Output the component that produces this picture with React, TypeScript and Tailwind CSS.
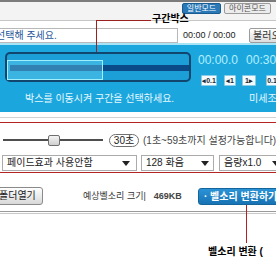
const Caret = () => (
  <svg width="8" height="5" viewBox="0 0 8 5" className="flex-none">
    <path d="M0 0h8L4 5z" fill="#222" />
  </svg>
);

const StepButton = ({ label, className }: { label: string; className: string }) => (
  <span
    className={`h-[11px] rounded-[1px] border border-[#8ccbe6] bg-[#f4fbfe] text-[7px] leading-[9px] text-center text-[#1d2b36] font-bold whitespace-nowrap overflow-hidden ${className}`}
  >
    {label}
  </span>
);

export default function App() {
  return (
    <div className="relative w-[276px] h-[260px] overflow-hidden bg-white text-[#333] font-['Liberation_Sans','Noto_Sans_CJK_KR',sans-serif]">
      {/* toolbar */}
      <div className="h-[21px] flex justify-end items-start gap-[3px] pr-[5px] pt-[1px] border-t-[2px] border-t-[#7c7c7c] border-b border-b-[#c6c6c6] bg-[#f3f3f3]">
        <span className="h-[11px] w-[39px] rounded-[2px] border border-[#1b5c90] bg-[#2a79b6] text-white text-[8px] leading-[9px] text-center">
          일반모드
        </span>
        <span className="h-[11px] w-[47px] rounded-[2px] border border-[#9a9a9a] bg-[#ececec] text-[#555] text-[8px] leading-[9px] text-center">
          아이콘모드
        </span>
      </div>

      {/* file row */}
      <div className="mt-[7px] h-[15px] flex items-center">
        <div className="w-[178px] h-full flex items-center border-y border-r border-[#b8b8b8] bg-white">
          <span className="-ml-[4px] text-[10px] leading-none text-[#28579a] whitespace-nowrap">선택해 주세요.</span>
        </div>
        <span className="ml-[5px] text-[9px] leading-none text-[#222] whitespace-nowrap">00:00 / 00:00</span>
        <span className="ml-auto -mr-[6px] w-[33px] h-[15px] rounded-[2px] border border-[#9c9c9c] bg-gradient-to-b from-white to-[#dcdcdc] text-[10px] leading-[13px] pl-[3px] whitespace-nowrap">
          불러오기
        </span>
      </div>

      {/* range panel */}
      <div className="h-[69px] border-t-[2px] border-t-[#a8e3f6] bg-[#1ba7de]">
        <div className="flex pt-[7px] pl-[5px]">
          <div className="relative w-[186px] h-[30px] flex-none rounded-[5px] border-2 border-[#11466f] bg-[#1b9fd6]">
            <div className="absolute left-[3px] right-0 top-[11px] h-[6px] bg-[#0b4a88]" />
            <div className="absolute left-0 top-[6px] w-[96px] h-[20px] border border-[#9ff0ff] bg-[#6fd4f5]/40" />
          </div>
          <div className="ml-[7px] flex flex-col">
            <div className="mt-[2px] h-[12px] flex text-[12px] leading-[12px] text-[#b4efff] whitespace-nowrap">
              <span>00:00.0</span>
              <span className="ml-[8px]">00:30.0</span>
            </div>
            <div className="mt-[9px] flex">
              <StepButton label="◂0.1" className="ml-[3px] w-[16px]" />
              <StepButton label="◂1" className="ml-[7px] w-[12px]" />
              <StepButton label="1▸" className="ml-[6px] w-[14px]" />
              <StepButton label="0.1▸" className="ml-[10px] w-[16px]" />
            </div>
          </div>
        </div>
        <div className="mt-[8px] h-[10px] flex items-center text-[10px] leading-none text-[#e6f8ff] whitespace-nowrap">
          <span className="pl-[25px] w-[249px] flex-none">박스를 이동시켜 구간을 선택하세요.</span>
          <span>미세조정</span>
        </div>
      </div>

      <div className="h-[10px] pt-[5px]">
        <div className="h-px bg-[#d2d2d2]" />
      </div>

      {/* settings */}
      <div className="h-[51px] flex flex-col border-y border-[#b42424]">
        <div className="mt-[11px] h-[13px] flex items-center">
          <div className="relative ml-[3px] w-[100px] h-[13px] flex-none">
            <div className="absolute left-0 right-0 top-[5px] h-[2px] bg-[#4e4e4e]" />
            <div className="absolute left-[45px] top-[1px] w-[12px] h-[11px] rounded-[2px] border border-[#6f6f6f] bg-gradient-to-b from-[#f4f4f4] to-[#cfcfcf]" />
          </div>
          <span className="ml-[6px] w-[30px] h-[13px] flex-none rounded-full border border-[#707070] bg-white text-[10px] leading-[11px] text-center text-[#222]">
            30초
          </span>
          <span className="ml-[4px] text-[10px] leading-none text-[#444] whitespace-nowrap">(1초~59초까지 설정가능합니다)</span>
        </div>
        <div className="mt-[8px] h-[16px] flex">
          <div className="ml-[2px] w-[135px] flex-none flex items-center justify-between pl-[4px] pr-[6px] border border-[#ababab] bg-white">
            <span className="text-[10px] leading-none text-[#222] whitespace-nowrap">페이드효과 사용안함</span>
            <Caret />
          </div>
          <div className="ml-[4px] w-[73px] flex-none flex items-center justify-between pl-[4px] pr-[4px] border border-[#ababab] bg-white">
            <span className="text-[10px] leading-none text-[#222] whitespace-nowrap">128 화음</span>
            <Caret />
          </div>
          <div className="ml-[5px] w-[66px] flex-none flex items-center justify-between pl-[4px] pr-[4px] border border-[#ababab] bg-white">
            <span className="text-[10px] leading-none text-[#222] whitespace-nowrap">음량x1.0</span>
            <Caret />
          </div>
        </div>
      </div>

      {/* actions */}
      <div className="mt-[14px] h-[18px] flex items-center">
        <span className="-ml-[5px] w-[48px] h-[18px] flex-none rounded-[3px] border border-[#8a8a8a] bg-gradient-to-b from-white to-[#d8d8d8] text-[10px] leading-[16px] pl-[3px] text-[#222] whitespace-nowrap">
          폴더열기
        </span>
        <span className="ml-[40px] text-[9px] leading-none text-[#333] whitespace-nowrap">예상벨소리 크기|</span>
        <span className="ml-[8px] text-[9px] leading-none font-bold text-[#444]">469KB</span>
        <span className="ml-auto -mr-[10px] w-[88px] h-[17px] flex-none rounded-[3px] border border-[#15659d] bg-gradient-to-b from-[#2a93d6] to-[#1773b4] text-white text-[10px] leading-[15px] font-bold pl-[5px] whitespace-nowrap">
          · 벨소리 변환하기
        </span>
      </div>
      <div className="mt-[6px] h-px bg-[#9a9a9a]" />
      <div className="mt-px h-px bg-[#c8c8c8]" />

      {/* annotations */}
      <div className="absolute left-[96px] top-[20px] w-px h-[32px] bg-[#9c2020]" />
      <div className="absolute left-[96px] top-[20px] w-[55px] h-px bg-[#9c2020]" />
      <span className="absolute left-[152px] top-[13px] text-[10px] leading-[12px] font-bold text-black whitespace-nowrap">구간박스</span>
      <div className="absolute left-[246px] top-[205px] w-px h-[38px] bg-[#b02222]" />
      <span className="absolute left-[208px] top-[246px] text-[10px] leading-[12px] font-bold text-black whitespace-nowrap">벨소리 변환 (</span>
    </div>
  );
}
